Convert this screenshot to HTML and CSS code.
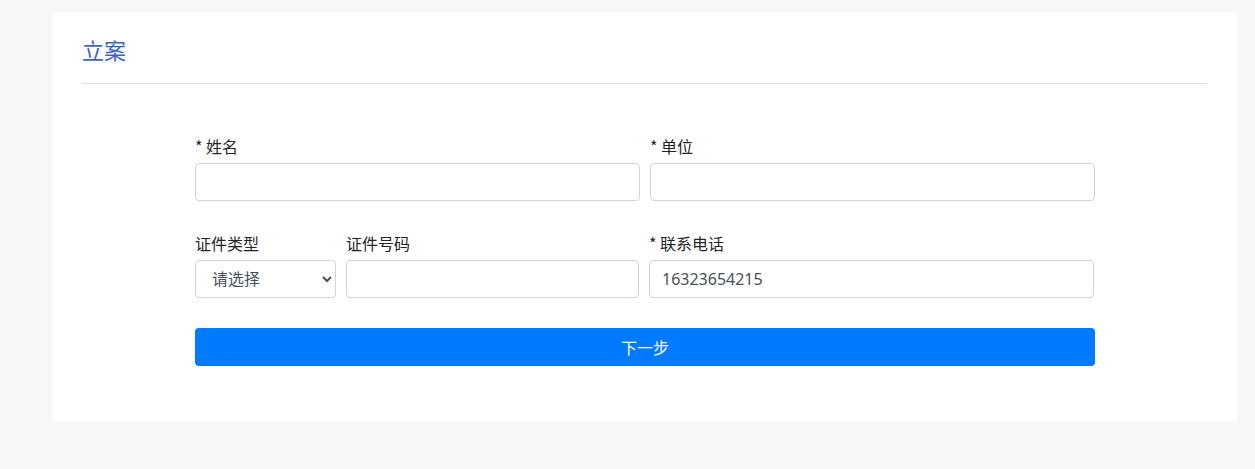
FILE: index.html
```html
<!DOCTYPE html>
<html lang="zh-CN">
<head>
<meta charset="utf-8">
<title>立案</title>
<link rel="stylesheet" href="styles.css">
</head>
<body>
<div class="card">
  <div class="card-header">
    <h1 class="title">立案</h1>
  </div>
  <form class="form">
    <div class="row row-2">
      <div class="field">
        <label class="label">* 姓名</label>
        <input class="control" type="text">
      </div>
      <div class="field">
        <label class="label">* 单位</label>
        <input class="control" type="text">
      </div>
    </div>
    <div class="row row-3">
      <div class="field">
        <label class="label">证件类型</label>
        <select class="control select">
          <option>请选择</option>
        </select>
      </div>
      <div class="field">
        <label class="label">证件号码</label>
        <input class="control" type="text">
      </div>
      <div class="field">
        <label class="label">* 联系电话</label>
        <input class="control" type="text" value="16323654215">
      </div>
    </div>
    <button class="btn" type="button">下一步</button>
  </form>
</div>
</body>
</html>
```

FILE: styles.css
```css
html, body {
  margin: 0;
  padding: 0;
  background: #f7f7f7;
}
body {
  padding: 12px 18px 0 52px;
  font-family: "Noto Sans", "Noto Sans CJK SC", sans-serif;
  color: #212529;
}
.card {
  background: #fff;
  height: 409px;
  box-sizing: border-box;
  padding: 0 30px;
}
.card-header {
  padding: 22px 0 19px;
  border-bottom: 1px solid #dcdcdc;
}
.title {
  margin: 0;
  font-size: 22px;
  line-height: 30px;
  font-weight: 400;
  color: #3a64c9;
  font-family: "Noto Sans CJK SC", sans-serif;
}
.form {
  width: 900px;
  margin: 51px 0 0 113px;
}
.row {
  display: grid;
  column-gap: 10px;
}
.row-2 {
  grid-template-columns: 445px 445px;
}
.row-3 {
  grid-template-columns: 141px 293px 445px;
  margin-top: 31px;
}
.field {
  display: flex;
  flex-direction: column;
}
.label {
  display: block;
  font-size: 16px;
  line-height: 22px;
  margin-bottom: 6px;
  font-family: "Noto Sans CJK SC", sans-serif;
}
.control {
  box-sizing: border-box;
  height: 38px;
  width: 100%;
  margin: 0;
  padding: 0 12px;
  border: 1px solid #ced4da;
  border-radius: 4px;
  background: #fff;
  font-family: "Noto Sans", "Noto Sans CJK SC", sans-serif;
  font-size: 16px;
  color: #495057;
  outline: none;
}
.select {
  padding: 0 8px 0 12px;
}
.btn {
  display: block;
  width: 900px;
  height: 38px;
  margin-top: 30px;
  border: 0;
  border-radius: 4px;
  background: #007bff;
  color: #fff;
  font-size: 16px;
  font-family: "Noto Sans CJK SC", sans-serif;
  padding: 0;
}
```
